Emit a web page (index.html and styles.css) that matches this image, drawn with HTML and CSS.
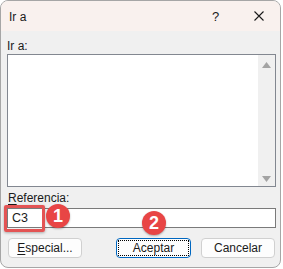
FILE: index.html
```html
<!DOCTYPE html>
<html lang="es">
<head>
    <meta charset="UTF-8">
    <title>Ir a</title>
    <link rel="stylesheet" href="styles.css">
</head>
<body>
    <div class="dialog">
        <div class="titlebar">
            <span class="title">Ir a</span>
            <span class="help">?</span>
            <span class="close">
                <svg width="10" height="10" viewBox="0 0 10 10">
                    <path d="M0.5 0.5 L9.5 9.5 M9.5 0.5 L0.5 9.5" stroke="#1a1a1a" stroke-width="1.1"/>
                </svg>
            </span>
        </div>

        <div class="content">
            <div class="label">Ir a:</div>
            <div class="listbox">
                <div class="list-items"></div>
                <div class="scrollbar">
                    <svg width="9" height="6" viewBox="0 0 9 6"><path d="M4.5 0 L9 6 L0 6 Z" fill="#a3a3a3"/></svg>
                    <svg width="9" height="6" viewBox="0 0 9 6"><path d="M0 0 L9 0 L4.5 6 Z" fill="#a3a3a3"/></svg>
                </div>
            </div>

            <div class="label ref-label"><u>R</u>eferencia:</div>
            <div class="ref-input">C3</div>

            <div class="buttons">
                <button class="btn"><u>E</u>special...</button>
                <div class="btn-group">
                    <button class="btn btn-default"><span class="focus-ring">Aceptar</span></button>
                    <button class="btn">Cancelar</button>
                </div>
            </div>
        </div>

        <!-- callouts over the dialog -->
        <div class="highlight"></div>
        <div class="badge badge-one">1</div>
        <div class="badge badge-two">2</div>
    </div>
</body>
</html>
```

FILE: styles.css
```css
* {
    box-sizing: border-box;
    margin: 0;
    padding: 0;
}

body {
    background: #ffffff;
    font-family: "Liberation Sans", Arial, sans-serif;
    font-size: 12px;
    color: #1a1a1a;
}

.dialog {
    position: relative;
    width: 281px;
    height: 268px;
    border: 1px solid #a6a6a6;
    border-radius: 8px;
    background: #f0f0f0;
    overflow: hidden;
}

.titlebar {
    display: flex;
    align-items: center;
    height: 30px;
    background: #f9f1ee;
    padding-left: 8px;
}

.title {
    flex: 1;
    font-size: 12px;
    padding-top: 1px;
}

.help {
    width: 42px;
    font-size: 13px;
    padding-top: 1px;
}

.close {
    display: flex;
    width: 26px;
}

.content {
    padding: 8px 4px 0 6px;
}

.label {
    height: 14px;
    line-height: 14px;
}

.listbox {
    display: flex;
    height: 133px;
    margin-top: 1px;
    border: 1px solid #828790;
    background: #ffffff;
}

.list-items {
    flex: 1;
}

.scrollbar {
    display: flex;
    flex-direction: column;
    justify-content: space-between;
    align-items: center;
    width: 17px;
    padding: 7px 0 4px;
    background: #f0f0f0;
}

.ref-label {
    margin-top: 4px;
    padding-left: 1px;
}

.ref-label u,
.btn u {
    text-decoration-thickness: 1px;
    text-underline-offset: 2px;
}

.ref-input {
    height: 20px;
    margin-top: 3px;
    border: 1px solid #7a7a7a;
    background: #ffffff;
    line-height: 18px;
    padding-left: 4px;
    font-size: 12.5px;
}

.buttons {
    display: flex;
    justify-content: space-between;
    margin-top: 10px;
    padding: 0 1px;
}

.btn-group {
    display: flex;
    gap: 10px;
}

.btn {
    width: 74px;
    height: 20px;
    border: 1px solid #d0d0d0;
    border-radius: 4px;
    background: #fdfdfd;
    font-family: "Liberation Sans", Arial, sans-serif;
    font-size: 12px;
    color: #1a1a1a;
}

.btn-default {
    width: 75px;
    border-color: #0067c0;
    padding: 1px;
}

.focus-ring {
    display: block;
    height: 16px;
    line-height: 14px;
    border: 1px dotted #000000;
}

.highlight {
    position: absolute;
    left: 3px;
    top: 204px;
    width: 41px;
    height: 27px;
    border: 3px solid #e35454;
    border-radius: 2px;
    box-shadow: 0 1px 3px rgba(0, 0, 0, 0.3);
}

.badge {
    position: absolute;
    width: 24px;
    height: 24px;
    border-radius: 50%;
    background: #e84545;
    color: #ffffff;
    font-family: "Liberation Sans", Arial, sans-serif;
    font-weight: bold;
    font-size: 18px;
    line-height: 24px;
    text-align: center;
    box-shadow: 0 1px 2px rgba(0, 0, 0, 0.3);
}

.badge-one {
    left: 45px;
    top: 203px;
}

.badge-two {
    left: 141px;
    top: 210px;
}
```
